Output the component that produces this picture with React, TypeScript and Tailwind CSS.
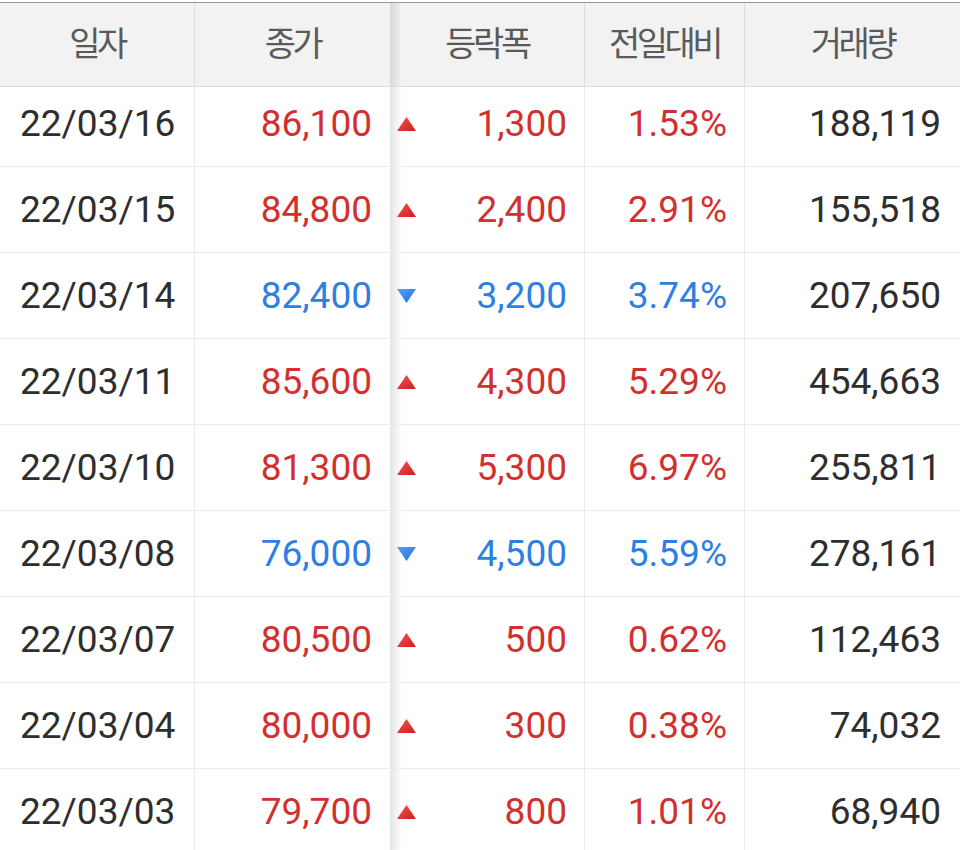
const rows = [
  { date: "22/03/16", close: "86,100", up: true, diff: "1,300", rate: "1.53%", vol: "188,119" },
  { date: "22/03/15", close: "84,800", up: true, diff: "2,400", rate: "2.91%", vol: "155,518" },
  { date: "22/03/14", close: "82,400", up: false, diff: "3,200", rate: "3.74%", vol: "207,650" },
  { date: "22/03/11", close: "85,600", up: true, diff: "4,300", rate: "5.29%", vol: "454,663" },
  { date: "22/03/10", close: "81,300", up: true, diff: "5,300", rate: "6.97%", vol: "255,811" },
  { date: "22/03/08", close: "76,000", up: false, diff: "4,500", rate: "5.59%", vol: "278,161" },
  { date: "22/03/07", close: "80,500", up: true, diff: "500", rate: "0.62%", vol: "112,463" },
  { date: "22/03/04", close: "80,000", up: true, diff: "300", rate: "0.38%", vol: "74,032" },
  { date: "22/03/03", close: "79,700", up: true, diff: "800", rate: "1.01%", vol: "68,940" },
];

const Arrow = ({ up }: { up: boolean }) => (
  <svg width="19" height="14" viewBox="0 0 19 14">
    <defs>
      <linearGradient id="gUp" x1="0" y1="0" x2="1" y2="1">
        <stop offset="0" stopColor="#f65454" />
        <stop offset="1" stopColor="#d01c1c" />
      </linearGradient>
      <linearGradient id="gDown" x1="0" y1="0" x2="1" y2="1">
        <stop offset="0" stopColor="#5aa0f5" />
        <stop offset="1" stopColor="#1f6fe0" />
      </linearGradient>
    </defs>
    {up ? (
      <polygon points="0,14 9.5,0 19,14" fill="url(#gUp)" />
    ) : (
      <polygon points="0,0 19,0 9.5,14" fill="url(#gDown)" />
    )}
  </svg>
);

const head = "flex items-center justify-center pb-[6px] text-[#5a5a5a] text-[34px] tracking-[-3.5px]";

export default function App() {
  return (
    <div className="w-[960px] h-[850px] overflow-hidden bg-white font-['Roboto','Noto_Sans_CJK_KR',sans-serif]">
      <div className="pt-[2px]">
        <div className="grid grid-cols-[195px_195px_195px_160px_215px] h-[85px] bg-[#f2f2f2] border-t border-[#9a9a9a] border-b border-b-[#dcdcdc] font-['Noto_Sans_CJK_KR',sans-serif]">
          <div className={`${head} border-r border-[#dedede]`}>일자</div>
          <div className={`${head}`}>종가</div>
          <div className={`${head} border-r border-[#dedede] bg-[linear-gradient(to_right,#d8d8d8,#f2f2f2_12px)]`}>등락폭</div>
          <div className={`${head} border-r border-[#dedede]`}>전일대비</div>
          <div className={`${head}`}>거래량</div>
        </div>
      </div>
      {rows.map((r, i) => {
        const color = r.up ? "text-[#d2302f]" : "text-[#2d7fe3]";
        const pad = i === 0 ? "pb-[6px]" : "";
        return (
          <div
            key={r.date}
            className={`grid grid-cols-[195px_195px_195px_160px_215px] border-b border-[#ececec] text-[37px] ${i === 0 ? "h-[80px]" : "h-[86px]"}`}
          >
            <div className={`flex items-center pl-[20px] text-[#2e2e2e] border-r border-[#ececec] ${pad}`}>{r.date}</div>
            <div className={`flex items-center justify-end pr-[18px] ${color} ${pad}`}>{r.close}</div>
            <div className={`flex items-center justify-between pl-[7px] pr-[17px] border-r border-[#ececec] bg-[linear-gradient(to_right,#e4e4e4,#ffffff_12px)] ${pad}`}>
              <Arrow up={r.up} />
              <span className={color}>{r.diff}</span>
            </div>
            <div className={`flex items-center justify-end pr-[17px] border-r border-[#ececec] ${color} ${pad}`}>{r.rate}</div>
            <div className={`flex items-center justify-end pr-[19px] text-[#2e2e2e] ${pad}`}>{r.vol}</div>
          </div>
        );
      })}
    </div>
  );
}
